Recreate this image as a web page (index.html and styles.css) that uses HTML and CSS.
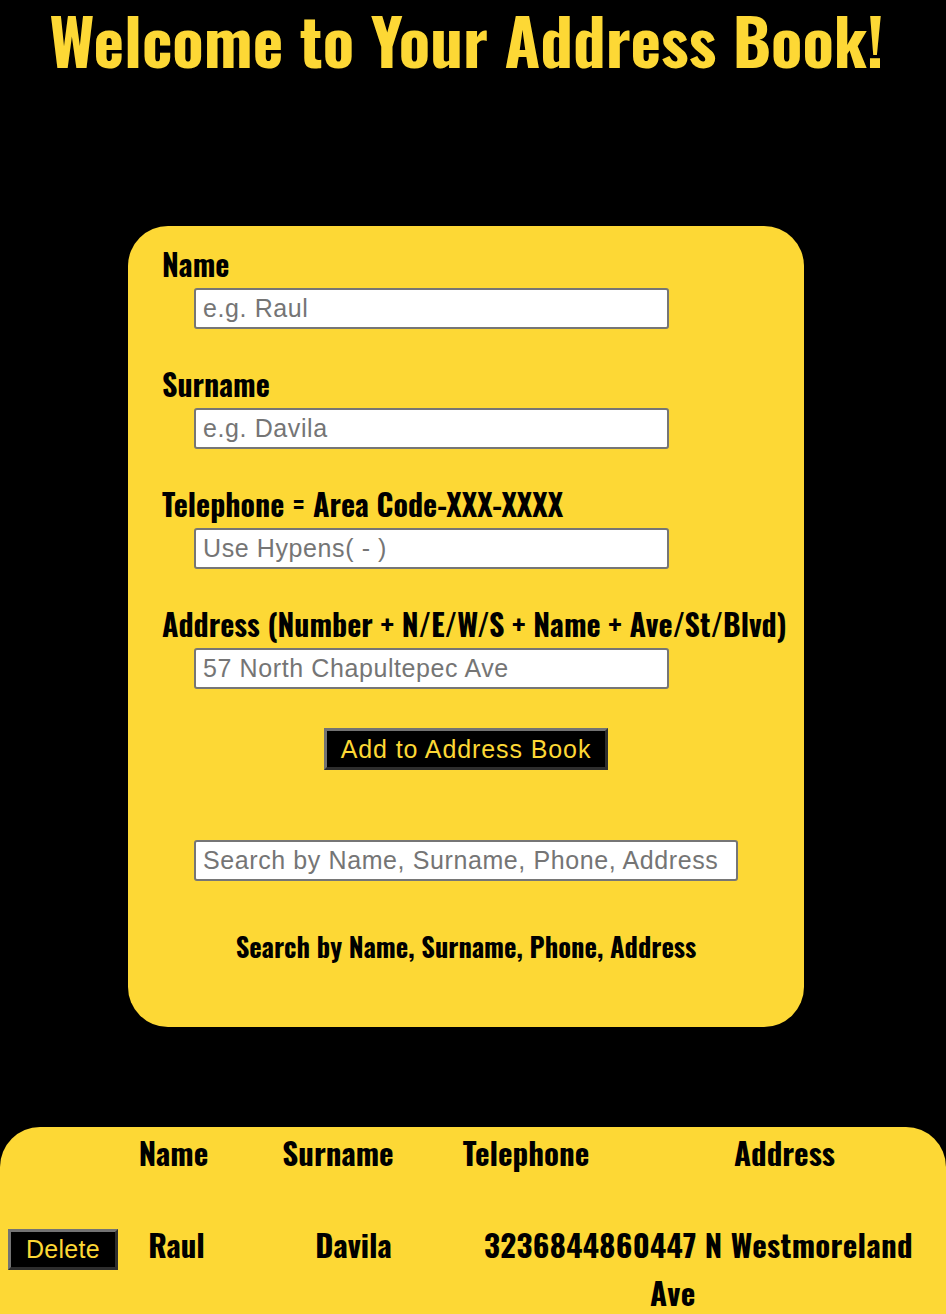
FILE: index.html
```html
<!DOCTYPE html>
<html>
<head>
	<title>Address Book</title>
	<link rel="stylesheet" href="styles.css">
</head>
<body>

	<h1 class="title">Welcome to Your Address Book!</h1>

	<form class="entryCard">
		<div class="field">
			<label class="fieldLabel" for="name">Name</label>
			<input class="textInput" type="text" id="name" placeholder="e.g. Raul">
		</div>
		<div class="field">
			<label class="fieldLabel" for="surname">Surname</label>
			<input class="textInput" type="text" id="surname" placeholder="e.g. Davila">
		</div>
		<div class="field">
			<label class="fieldLabel" for="phone">Telephone = Area Code-XXX-XXXX</label>
			<input class="textInput" type="text" id="phone" placeholder="Use Hypens( - )">
		</div>
		<div class="field">
			<label class="fieldLabel" for="address">Address (Number + N/E/W/S + Name + Ave/St/Blvd)</label>
			<input class="textInput" type="text" id="address" placeholder="57 North Chapultepec Ave">
		</div>

		<button class="blackBtn addBtn" type="button">Add to Address Book</button>

		<input class="textInput searchInput" type="text" id="search" placeholder="Search by Name, Surname, Phone, Address">
		<p class="searchHint">Search by Name, Surname, Phone, Address</p>
	</form>

	<div class="bookCard">
		<div class="bookHead">
			<span class="headBtn"></span>
			<span class="headName">Name</span>
			<span class="headSurname">Surname</span>
			<span class="headPhone">Telephone</span>
			<span class="headAddress">Address</span>
		</div>
		<div class="bookEntry">
			<span class="cellBtn"><button class="blackBtn deleteBtn" type="button">Delete</button></span>
			<span class="cellName">Raul</span>
			<span class="cellSurname">Davila</span>
			<span class="cellPhone">3236844860</span>
			<span class="cellAddress">447 N Westmoreland Ave</span>
		</div>
	</div>

</body>
</html>
```

FILE: styles.css
```css
body{
	margin: 0;
	background-color: #000;
	font-family: "Oswald", "DejaVu Sans Condensed", sans-serif;
	font-weight: bold;
	color: #000;
}

.title{
	margin: 0;
	padding: 4px 13px 0 0;
	font-size: 65px;
	line-height: 70px;
	text-align: center;
	color: #fdd835;
}

/* form card */
.entryCard{
	width: 676px;
	box-sizing: border-box;
	margin: 152px 0 0 128px;
	padding: 20px 10px 65px 34px;
	background-color: #fdd835;
	border-radius: 40px;
	display: flex;
	flex-direction: column;
}

.field{
	display: flex;
	flex-direction: column;
	align-items: flex-start;
	margin-bottom: 37px;
}

.fieldLabel{
	font-size: 30px;
	line-height: 36px;
	white-space: nowrap;
}

.textInput{
	width: 475px;
	height: 41px;
	box-sizing: border-box;
	margin: 6px 0 0 32px;
	padding: 0 7px;
	border: 2px solid #767676;
	border-radius: 3px;
	background: #fff;
	font-family: "Liberation Sans", Arial, sans-serif;
	font-weight: normal;
	font-size: 25px;
	letter-spacing: 0.6px;
	color: #000;
}

.textInput::placeholder{
	color: #757575;
}

.blackBtn{
	background-color: #000;
	color: #fdd835;
	border: 3px solid;
	border-color: #737373 #2e2e2e #2e2e2e #737373;
	font-family: "Liberation Sans", Arial, sans-serif;
	font-weight: normal;
	font-size: 25px;
	letter-spacing: 0.9px;
	height: 42px;
	padding: 0 8px;
	cursor: pointer;
}

.addBtn{
	align-self: center;
	width: 284px;
	margin: 2px 0 0 -24px;
}

.searchInput{
	width: 544px;
	margin-top: 70px;
}

.searchHint{
	margin: 49px 0 0 -24px;
	font-size: 26.5px;
	line-height: 32px;
	text-align: center;
}

/* contacts card */
.bookCard{
	margin-top: 100px;
	padding-top: 1px;
	min-height: 200px;
	background-color: #fdd835;
	border-radius: 40px 40px 0 0;
	font-size: 31px;
	line-height: 48px;
}

.bookHead, .bookEntry{
	display: flex;
	align-items: flex-start;
}

.bookHead span{
	text-align: center;
}

.headBtn{ width: 100px; }
.headName{ width: 147px; }
.headSurname{ width: 182px; }
.headPhone{ width: 194px; }
.headAddress{ width: 323px; }

.bookEntry{
	margin-top: 44px;
}

.cellBtn{
	width: 122px;
	padding-left: 8px;
}

.deleteBtn{
	width: 110px;
	height: 41px;
	padding: 0;
	letter-spacing: 0.3px;
}

.cellName{
	width: 93px;
	text-align: center;
}

.cellSurname{
	width: 261px;
	text-align: center;
}

.cellPhone, .cellAddress{
	letter-spacing: 0.3px;
}

.cellAddress{
	width: 285px;
	text-align: left;
}
```
